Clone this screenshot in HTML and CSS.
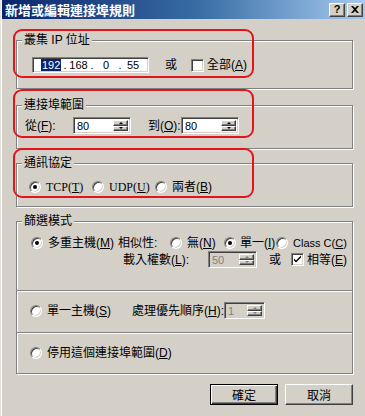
FILE: index.html
```html
<!DOCTYPE html>
<html>
<head>
<meta charset="utf-8">
<link rel="stylesheet" href="styles.css">
</head>
<body>
<div class="dialog">
  <div class="titlebar">
    <span class="title">新增或編輯連接埠規則</span>
    <div class="tbtns">
      <span class="tbtn help">?</span>
      <span class="tbtn close"><svg width="8" height="7" viewBox="0 0 8 7"><path d="M0 0h2l2 2 2-2h2L5 3.5 8 7H6L4 5 2 7H0l3-3.5z" fill="#000"/></svg></span>
    </div>
  </div>
  <div class="body">
    <div class="group g1">
      <div class="legend">叢集 IP 位址</div>
      <div class="row r-ip">
        <div class="field ip">
          <span class="oct o1"><span class="sel">192</span></span><span class="dot">.</span><span class="oct o2">168</span><span class="dot">.</span><span class="oct o3">0</span><span class="dot">.</span><span class="oct o4">55</span>
        </div>
        <span class="or">或</span>
        <span class="check"></span>
        <span class="clabel">全部(<u>A</u>)</span>
      </div>
    </div>

    <div class="group g2">
      <div class="legend">連接埠範圍</div>
      <div class="row r-port">
        <span class="lbl from">從(<u>F</u>):</span>
        <div class="field spin w58"><span class="val">80</span><span class="arrows"><span class="arr"><i class="up"></i></span><span class="arr"><i class="down"></i></span></span></div>
        <span class="lbl to">到(<u>O</u>):</span>
        <div class="field spin w58"><span class="val">80</span><span class="arrows"><span class="arr"><i class="up"></i></span><span class="arr"><i class="down"></i></span></span></div>
      </div>
    </div>

    <div class="group g3">
      <div class="legend">通訊協定</div>
      <div class="row r-proto">
        <span class="opt w63"><span class="radio on"></span><span class="serif">TCP(<u>T</u>)</span></span>
        <span class="opt w63"><span class="radio"></span><span class="serif">UDP(<u>U</u>)</span></span>
        <span class="opt"><span class="radio"></span><span>兩者(<u>B</u>)</span></span>
      </div>
    </div>

    <div class="group g4">
      <div class="legend">篩選模式</div>
      <div class="row r-multi">
        <span class="opt w87"><span class="radio on"></span><span>多重主機(<u>M</u>)</span></span>
        <span class="w52">相似性:</span>
        <span class="opt w54"><span class="radio"></span><span>無(<u>N</u>)</span></span>
        <span class="opt w52 tight"><span class="radio on"></span><span>單一(<u>I</u>)</span></span>
        <span class="opt"><span class="radio"></span><span class="sans11">Class C(<u>C</u>)</span></span>
      </div>
      <div class="row r-load">
        <span class="w85">載入權數(<u>L</u>):</span>
        <div class="field spin dis w49"><span class="val">50</span><span class="arrows"><span class="arr"><i class="up"></i></span><span class="arr"><i class="down"></i></span></span></div>
        <span class="or2">或</span>
        <span class="check on"><svg width="9" height="9" viewBox="0 0 9 9"><path d="M1 3.5l2 2 5-5v2l-5 5-2-2z" fill="#000"/></svg></span>
        <span class="clabel">相等(<u>E</u>)</span>
      </div>
      <div class="sep s1"></div>
      <div class="row r-single">
        <span class="opt w102"><span class="radio"></span><span>單一主機(<u>S</u>)</span></span>
        <span class="w92">處理優先順序(<u>H</u>):</span>
        <div class="field spin dis w41"><span class="val">1</span><span class="arrows"><span class="arr"><i class="up"></i></span><span class="arr"><i class="down"></i></span></span></div>
      </div>
      <div class="sep s2"></div>
      <div class="row r-disable">
        <span class="opt"><span class="radio"></span><span>停用這個連接埠範圍(<u>D</u>)</span></span>
      </div>
    </div>

    <div class="actions">
      <button class="btn default">確定</button>
      <button class="btn">取消</button>
    </div>
  </div>

  <div class="mark m1"></div>
  <div class="mark m2"></div>
  <div class="mark m3"></div>
</div>
</body>
</html>
```

FILE: styles.css
```css
html, body {
  margin: 0;
  padding: 0;
  background: #d4d0c8;
}

.dialog {
  position: relative;
  width: 365px;
  height: 416px;
  box-sizing: border-box;
  background: #d4d0c8;
  box-shadow: inset 1px 0 0 #e4e2dc, inset 2px 0 0 #ffffff;
  font-family: "Liberation Sans", "Noto Sans CJK TC", sans-serif;
  font-size: 12px;
  line-height: 14px;
  color: #000;
  overflow: hidden;
}

.titlebar {
  margin-left: 2px;
  height: 19px;
  display: flex;
  align-items: center;
  justify-content: space-between;
  background: linear-gradient(to right, #0a246a 0%, #3a6ea5 55%, #a6caf0 100%);
}

.title {
  padding-left: 3px;
  color: #fff;
  font-weight: bold;
  font-size: 13px;
  line-height: 15px;
  font-family: "Noto Sans CJK TC", sans-serif;
}

.tbtns {
  display: flex;
  gap: 2px;
  padding-right: 2px;
}

.tbtn {
  width: 16px;
  height: 14px;
  box-sizing: border-box;
  background: #d4d0c8;
  border: 1px solid;
  border-color: #fff #404040 #404040 #fff;
  box-shadow: inset -1px -1px 0 #808080;
  display: flex;
  align-items: center;
  justify-content: center;
  font-weight: bold;
  font-size: 11px;
  line-height: 11px;
  font-family: "Liberation Sans", sans-serif;
}

.body {
  padding: 0 12px 0 16px;
}

.group {
  box-sizing: border-box;
  border: 1px solid #808080;
  box-shadow: inset 1px 1px 0 #fff, 1px 1px 0 #fff;
}

.legend {
  width: max-content;
  height: 14px;
  margin: -8px 0 0 5px;
  padding: 0 2px;
  background: #d4d0c8;
}

.row {
  display: flex;
  align-items: center;
}

.g1 { margin-top: 21px; height: 49px; }
.g2 { margin-top: 16px; height: 44px; }
.g3 { margin-top: 14px; height: 44px; }
.g4 { margin-top: 14px; height: 153px; }

/* sunken field */
.field {
  box-sizing: border-box;
  background: #fff;
  border: 1px solid;
  border-color: #808080 #fff #fff #808080;
  box-shadow: inset 1px 1px 0 #404040, inset -1px -1px 0 #d4d0c8;
}

/* group 1 */
.r-ip {
  margin-top: 10px;
  height: 16px;
  padding-left: 15px;
}

.ip {
  width: 117px;
  height: 16px;
  display: flex;
  align-items: center;
  padding-left: 8px;
  font-size: 11px;
  line-height: 12px;
}

.oct { display: inline-block; text-align: center; }
.o1 { width: 21px; text-align: left; }
.o2 { width: 21px; }
.o3 { width: 22px; }
.o4 { width: 20px; }
.dot { display: inline-block; width: 6px; text-align: center; }

.sel {
  background: #0a246a;
  color: #fff;
  padding: 0 1px;
}

.or { margin-left: 16px; width: 12px; }

.check {
  width: 13px;
  height: 13px;
  box-sizing: border-box;
  background: #fff;
  border: 1px solid;
  border-color: #808080 #fff #fff #808080;
  box-shadow: inset 1px 1px 0 #404040, inset -1px -1px 0 #d4d0c8;
  display: flex;
  align-items: center;
  justify-content: center;
  flex: none;
}

.r-ip .check { margin-left: 14px; }
.clabel { margin-left: 3px; }

/* group 2 */
.r-port {
  margin-top: 5px;
  height: 17px;
  padding-left: 8px;
}

.lbl.from { width: 48px; }
.lbl.to { margin-left: 17px; width: 33px; }

.spin {
  height: 17px;
  display: flex;
  align-items: stretch;
  padding: 2px;
}

.w58 { width: 58px; }
.w49 { width: 49px; }
.w41 { width: 41px; }

.val {
  flex: 1;
  padding-left: 1px;
  font-size: 11px;
  line-height: 13px;
}

.arrows {
  width: 15px;
  display: flex;
  flex-direction: column;
}

.arr {
  flex: 1;
  box-sizing: border-box;
  background: #d4d0c8;
  border: 1px solid;
  border-color: #fff #404040 #404040 #fff;
  box-shadow: inset -1px -1px 0 #808080;
  display: flex;
  align-items: center;
  justify-content: center;
}

.arr i {
  width: 0;
  height: 0;
  border-left: 2px solid transparent;
  border-right: 2px solid transparent;
}

.arr i.up { border-bottom: 2px solid #000; }
.arr i.down { border-top: 2px solid #000; }

.spin.dis { background: #d4d0c8; }
.spin.dis .val { color: #808080; }
.spin.dis .arr i.up { border-bottom-color: #808080; }
.spin.dis .arr i.down { border-top-color: #808080; }

/* radio options */
.opt {
  display: flex;
  align-items: center;
  gap: 5px;
}

.radio {
  position: relative;
  flex: none;
  width: 12px;
  height: 12px;
  box-sizing: border-box;
  border-radius: 50%;
  background: #fff;
  border: 1px solid;
  border-color: #808080 #fff #fff #808080;
  box-shadow: inset 1px 1px 0 #404040, inset -1px -1px 0 #d4d0c8;
}

.radio.on::after {
  content: "";
  position: absolute;
  left: 3px;
  top: 3px;
  width: 4px;
  height: 4px;
  border-radius: 50%;
  background: #000;
}

.serif { font-family: "Liberation Serif", "Noto Sans CJK TC", serif; }
.sans11 { font-size: 11px; }

.r-proto {
  margin-top: 9px;
  height: 16px;
  padding-left: 12px;
}

.w63 { width: 63px; }

/* group 4 */
.r-multi {
  margin-top: 7px;
  height: 16px;
  padding-left: 14px;
}

.w87 { width: 87px; }
.w52 { width: 52px; }
.w54 { width: 54px; }
.w85 { width: 85px; }
.w102 { width: 102px; }
.w92 { width: 92px; }
.tight { gap: 4px; }

.r-load {
  height: 17px;
  padding-left: 106px;
}

.or2 { margin-left: 12px; width: 22px; }

.sep {
  height: 1px;
  border-bottom: 1px solid #fff;
  background: #808080;
}

.s1 { margin-top: 22px; }
.s2 { margin-top: 13px; }

.r-single {
  margin-top: 10px;
  height: 17px;
  padding-left: 13px;
}

.r-disable {
  margin-top: 11px;
  height: 16px;
  padding-left: 13px;
}

/* buttons */
.actions {
  margin-top: 10px;
  display: flex;
  justify-content: flex-end;
  gap: 7px;
}

.btn {
  width: 68px;
  height: 21px;
  box-sizing: border-box;
  padding: 0;
  margin: 0;
  background: #d4d0c8;
  border: 1px solid;
  border-color: #fff #404040 #404040 #fff;
  box-shadow: inset -1px -1px 0 #808080;
  font-family: "Noto Sans CJK TC", sans-serif;
  font-size: 12px;
  line-height: 14px;
  color: #000;
}

.btn.default {
  border: 1px solid #000;
  box-shadow: inset 1px 1px 0 #fff, inset -1px -1px 0 #404040, inset -2px -2px 0 #808080;
}

/* red annotation outlines */
.mark {
  position: absolute;
  left: 13px;
  width: 241px;
  box-sizing: border-box;
  border: 2px solid #e3141b;
  border-radius: 9px;
}

.m1 { top: 29px; height: 49px; }
.m2 { top: 89px; height: 49px; }
.m3 { top: 148px; height: 50px; }
```
